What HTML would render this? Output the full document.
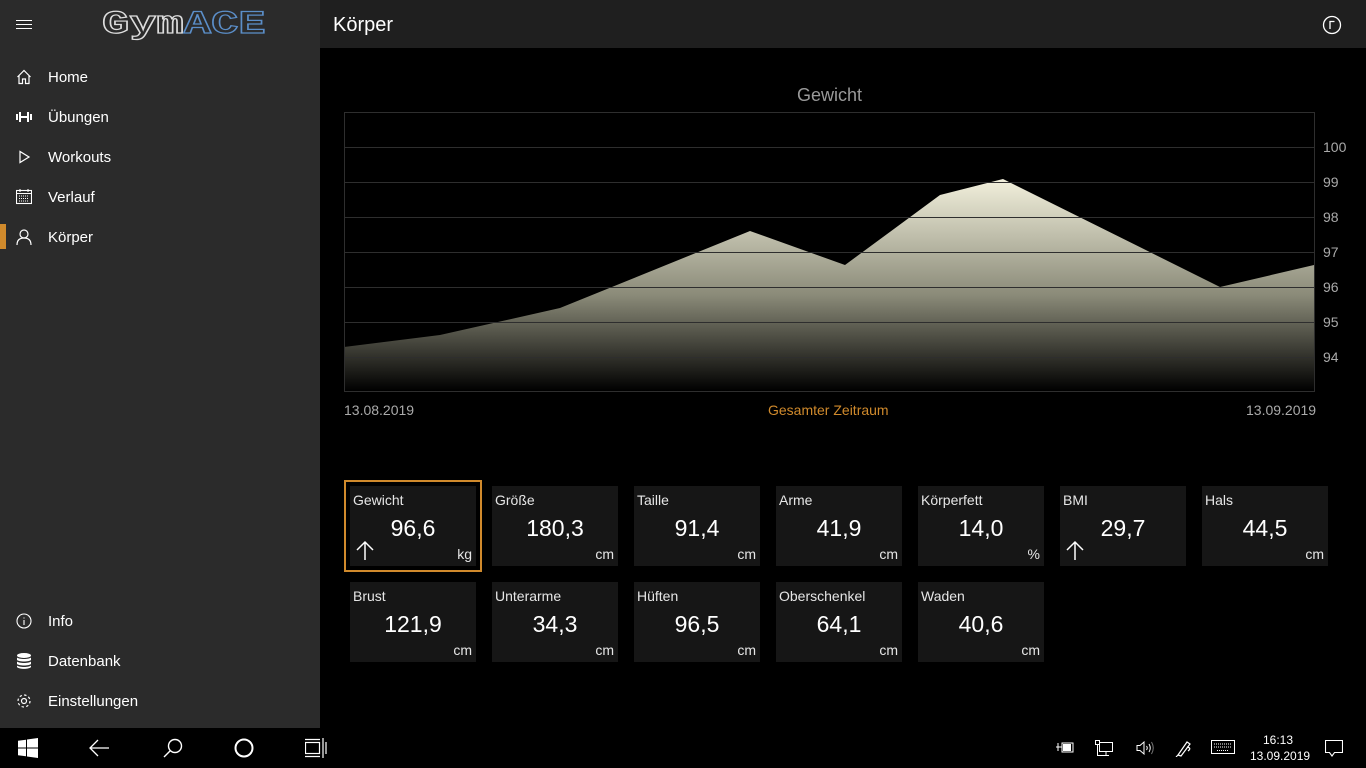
<!DOCTYPE html>
<html><head><meta charset="utf-8"><style>
*{margin:0;padding:0;box-sizing:border-box}
body{width:1366px;height:768px;overflow:hidden;background:#000;font-family:"Segoe UI","Liberation Sans",sans-serif;color:#fff;position:relative}
#side{position:absolute;left:0;top:0;width:320px;height:728px;background:#2b2b2b}
.nav{position:absolute;left:0;width:320px;height:40px;font-size:15px;color:#fff}
.nav span{position:absolute;left:48px;top:12px}
.nav svg{position:absolute;left:16px;top:12px}
#hdr{position:absolute;left:320px;top:0;width:1046px;height:48px;background:#1f1f1f}
#hdr .t{position:absolute;left:13px;top:14px;font-size:20px}
.card{position:absolute;width:126px;height:80px;background:#161616}
.card .l{position:absolute;left:3px;top:6px;font-size:14px;color:#e6e6e6}
.card .v{position:absolute;left:0;right:0;top:29px;text-align:center;font-size:23px}
.card .u{position:absolute;right:4px;top:60px;font-size:14px;color:#e6e6e6}
.card .a{position:absolute;left:6px;top:54px}
#tb{position:absolute;left:0;top:728px;width:1366px;height:40px;background:#000}
.ax{position:absolute;font-size:14px;color:#aaa}
</style></head><body>
<div id="side">
 <div style="position:absolute;left:16px;top:24px;width:16px;height:1px;background:#fff;box-shadow:0 -4px #fff,0 4px #fff"></div>
 <div style="position:absolute;left:102px;top:9px;font-family:'Liberation Mono',monospace;font-weight:bold;font-size:32px;line-height:32px;transform:scaleX(1.42);transform-origin:0 0;white-space:nowrap"><span style="color:transparent;-webkit-text-stroke:1.2px #ddd">Gym</span><span style="color:transparent;-webkit-text-stroke:1.2px #5b8ec8">ACE</span></div>
 <div class="nav" style="top:57px"><svg width="16" height="16" viewBox="0 0 16 16" fill="none" stroke="#fff" stroke-width="1.2"><path d="M1.5 8 8 1.5 14.5 8M3 6.5V14.5H6.5V10H9.5V14.5H13V6.5"/></svg><span>Home</span></div>
 <div class="nav" style="top:97px"><svg width="16" height="16" viewBox="0 0 16 16" fill="#fff"><rect x="0" y="5" width="2" height="6"/><rect x="3" y="3" width="2" height="10"/><rect x="11" y="3" width="2" height="10"/><rect x="14" y="5" width="2" height="6"/><rect x="5" y="7" width="6" height="2"/></svg><span>Übungen</span></div>
 <div class="nav" style="top:137px"><svg width="16" height="16" viewBox="0 0 16 16" fill="none" stroke="#fff" stroke-width="1.2"><path d="M4 2.5V13.5L13 8Z"/></svg><span>Workouts</span></div>
 <div class="nav" style="top:177px"><svg width="16" height="16" viewBox="0 0 16 16" fill="none" stroke="#fff" stroke-width="1.1"><rect x="0.5" y="1.5" width="15" height="13"/><path d="M0.5 4.5H15.5M4 0V3M12 0V3" /><path d="M3 7h10M3 9.5h10M3 12h10" stroke-dasharray="1 1"/></svg><span>Verlauf</span></div>
 <div style="position:absolute;left:0;top:224px;width:6px;height:25px;background:#d08a2c"></div>
 <div class="nav" style="top:217px"><svg width="16" height="16" viewBox="0 0 16 16" fill="none" stroke="#fff" stroke-width="1.2"><circle cx="8" cy="5" r="4"/><path d="M1 16C1 11 4 9 8 9S15 11 15 16"/></svg><span>Körper</span></div>
 <div class="nav" style="top:601px"><svg width="16" height="16" viewBox="0 0 16 16" fill="none" stroke="#fff" stroke-width="1.1"><circle cx="8" cy="8" r="7"/><path d="M8 7v5M8 4.5v1"/></svg><span>Info</span></div>
 <div class="nav" style="top:641px"><svg width="16" height="16" viewBox="0 0 16 16" fill="#fff"><ellipse cx="8" cy="2.5" rx="7" ry="2.5"/><path d="M1 4.5c2 2 12 2 14 0V7c-2 2-12 2-14 0zM1 8.5c2 2 12 2 14 0V11c-2 2-12 2-14 0zM1 12.5c2 2 12 2 14 0V14c-2 2.5-12 2.5-14 0z"/></svg><span>Datenbank</span></div>
 <div class="nav" style="top:681px"><svg width="16" height="16" viewBox="0 0 16 16" fill="none" stroke="#fff" stroke-width="1.2"><circle cx="8" cy="8" r="2.5"/><circle cx="8" cy="8" r="6" stroke-dasharray="2.4 2.3"/></svg><span>Einstellungen</span></div>
</div>
<div id="hdr"><div class="t">Körper</div>
 <svg style="position:absolute;left:1002px;top:15px" width="20" height="20" viewBox="0 0 20 20" fill="none" stroke="#fff" stroke-width="1.3"><circle cx="10" cy="10" r="8.5"/><path d="M8 14V6.5H12.5"/></svg></div>

<div style="position:absolute;left:797px;top:85px;font-size:18px;color:#999">Gewicht</div>
<svg style="position:absolute;left:0;top:0" width="1366" height="420">
 <defs><linearGradient id="g" x1="0" y1="179" x2="0" y2="391" gradientUnits="userSpaceOnUse"><stop offset="0" stop-color="#f2f0dc"/><stop offset="0.55" stop-color="#8a8a78"/><stop offset="1" stop-color="#000"/></linearGradient></defs>
 <path d="M344 347L440 335L560 308L750 231L845 265L940 195L1003 179L1220 287L1314 265V391H344Z" fill="url(#g)"/>
 <g stroke="#2e2e2e" stroke-width="1" fill="none">
  <rect x="344.5" y="112.5" width="970" height="279"/>
  <path d="M344 147.5H1314M344 182.5H1314M344 217.5H1314M344 252.5H1314M344 287.5H1314M344 322.5H1314M344 357.5H1314"/>
 </g>
 <g fill="#aaa" font-size="14" font-family="Liberation Sans, sans-serif">
  <text x="1323" y="152">100</text><text x="1323" y="187">99</text><text x="1323" y="222">98</text><text x="1323" y="257">97</text><text x="1323" y="292">96</text><text x="1323" y="327">95</text><text x="1323" y="362">94</text>
 </g>
</svg>
<div class="ax" style="left:344px;top:402px">13.08.2019</div>
<div class="ax" style="left:768px;top:402px;color:#d08a2c">Gesamter Zeitraum</div>
<div class="ax" style="left:1246px;top:402px">13.09.2019</div>

<div style="position:absolute;left:344px;top:480px;width:138px;height:92px;border:2px solid #d08a2c"></div>
<div class="card" style="left:350px;top:486px"><div class="l">Gewicht</div><div class="v">96,6</div><div class="u">kg</div><svg class="a" width="18" height="20" viewBox="0 0 18 20" fill="none" stroke="#fff" stroke-width="1.5"><path d="M9 20V2M1 10 9 2 17 10"/></svg></div>
<div class="card" style="left:492px;top:486px"><div class="l">Größe</div><div class="v">180,3</div><div class="u">cm</div></div>
<div class="card" style="left:634px;top:486px"><div class="l">Taille</div><div class="v">91,4</div><div class="u">cm</div></div>
<div class="card" style="left:776px;top:486px"><div class="l">Arme</div><div class="v">41,9</div><div class="u">cm</div></div>
<div class="card" style="left:918px;top:486px"><div class="l">Körperfett</div><div class="v">14,0</div><div class="u">%</div></div>
<div class="card" style="left:1060px;top:486px"><div class="l">BMI</div><div class="v">29,7</div><svg class="a" width="18" height="20" viewBox="0 0 18 20" fill="none" stroke="#fff" stroke-width="1.5"><path d="M9 20V2M1 10 9 2 17 10"/></svg></div>
<div class="card" style="left:1202px;top:486px"><div class="l">Hals</div><div class="v">44,5</div><div class="u">cm</div></div>
<div class="card" style="left:350px;top:582px"><div class="l">Brust</div><div class="v">121,9</div><div class="u">cm</div></div>
<div class="card" style="left:492px;top:582px"><div class="l">Unterarme</div><div class="v">34,3</div><div class="u">cm</div></div>
<div class="card" style="left:634px;top:582px"><div class="l">Hüften</div><div class="v">96,5</div><div class="u">cm</div></div>
<div class="card" style="left:776px;top:582px"><div class="l">Oberschenkel</div><div class="v">64,1</div><div class="u">cm</div></div>
<div class="card" style="left:918px;top:582px"><div class="l">Waden</div><div class="v">40,6</div><div class="u">cm</div></div>

<div id="tb">
 <svg style="position:absolute;left:18px;top:10px" width="20" height="20" viewBox="0 0 20 20" fill="#fff"><path d="M0 2.8 8 1.7V9.5H0ZM9 1.5 20 0V9.5H9ZM0 10.5H8V18.3L0 17.2ZM9 10.5H20V20L9 18.5Z"/></svg>
 <svg style="position:absolute;left:89px;top:11px" width="20" height="18" viewBox="0 0 20 18" fill="none" stroke="#fff" stroke-width="1.3"><path d="M20 9H1M9 1 1 9 9 17"/></svg>
 <svg style="position:absolute;left:163px;top:10px" width="20" height="20" viewBox="0 0 20 20" fill="none" stroke="#fff" stroke-width="1.4"><circle cx="12" cy="8" r="6.5"/><path d="M7.5 12.5 1 19"/></svg>
 <svg style="position:absolute;left:233px;top:9px" width="22" height="22" viewBox="0 0 22 22" fill="none" stroke="#fff" stroke-width="2"><circle cx="11" cy="11" r="8.5"/></svg>
 <svg style="position:absolute;left:305px;top:10px" width="22" height="20" viewBox="0 0 22 20" fill="none" stroke="#fff" stroke-width="1.2"><rect x="0.5" y="4.5" width="14" height="11"/><path d="M0 1.5H15M0 18.5H15M18 0V20M21 4V16"/></svg>
 <svg style="position:absolute;left:1056px;top:12px" width="18" height="14" viewBox="0 0 18 14" fill="#fff"><rect x="6" y="3" width="11" height="9" fill="none" stroke="#fff"/><rect x="7" y="4" width="8" height="7"/><path d="M0 7H6M2 3V11" stroke="#fff"/></svg>
 <svg style="position:absolute;left:1095px;top:12px" width="18" height="16" viewBox="0 0 18 16" fill="none" stroke="#fff"><rect x="4.5" y="2.5" width="13" height="9"/><rect x="0.5" y="0.5" width="4" height="4" fill="#000"/><path d="M2.5 4.5V15.5H9M11 11.5V15.5M8 15.5H14"/></svg>
 <svg style="position:absolute;left:1136px;top:13px" width="18" height="14" viewBox="0 0 18 14" fill="none" stroke="#fff"><path d="M1 4.5H4L8 1V13L4 9.5H1Z"/><path d="M10.5 5Q12 7 10.5 9M13 3Q15.5 7 13 11"/><path d="M15.5 1Q19 7 15.5 13" stroke="#777"/></svg>
 <svg style="position:absolute;left:1175px;top:11px" width="18" height="18" viewBox="0 0 18 18" fill="none" stroke="#fff" stroke-width="1.2"><path d="M3 16 12 3 15 5 6 17ZM3 16 1 18M12 8Q17 9 13 12"/></svg>
 <svg style="position:absolute;left:1211px;top:12px" width="24" height="14" viewBox="0 0 24 14" fill="none" stroke="#fff"><rect x="0.5" y="0.5" width="23" height="13"/><path d="M3 4H21M3 7H21M6 10.5H18" stroke-dasharray="1 1"/></svg>
 <div style="position:absolute;left:1250px;top:4px;width:56px;text-align:center;font-size:12px;line-height:16px">16:13<br>13.09.2019</div>
 <svg style="position:absolute;left:1325px;top:12px" width="18" height="17" viewBox="0 0 18 17" fill="none" stroke="#fff" stroke-width="1.1"><path d="M0.5 0.5H17.5V12.5H9.5L7 16 4.5 12.5H0.5Z"/></svg>
</div>
</body></html>
